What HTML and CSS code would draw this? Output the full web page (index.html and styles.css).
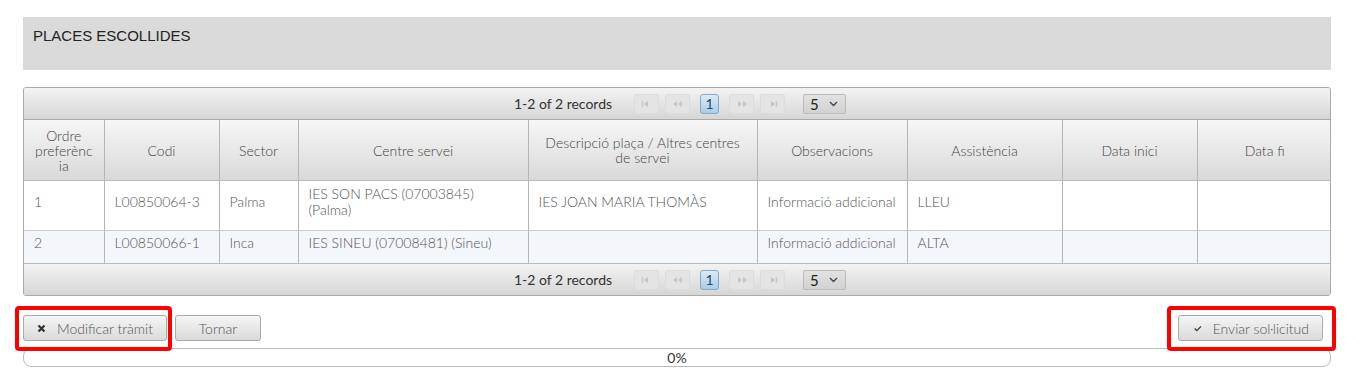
FILE: index.html
```html
<!DOCTYPE html>
<html lang="ca">
<head>
    <meta charset="UTF-8">
    <title>Places escollides</title>
    <link rel="stylesheet" href="styles.css">
</head>
<body>
    <div class="page">
        <div class="panel-title">PLACES ESCOLLIDES</div>

        <div class="grid">
            <div class="pager pager-top">
                <span class="records">1-2 of 2 records</span>
                <span class="pg-btn"><svg width="9" height="6" viewBox="0 0 9 6"><rect x="0" y="0" width="1.2" height="6" fill="#c4c4c4"/><path d="M6 0 L2 3 L6 6 Z" fill="#c4c4c4"/></svg></span>
                <span class="pg-btn"><svg width="10" height="6" viewBox="0 0 10 6"><path d="M4 0 L0 3 L4 6 Z M9 0 L5 3 L9 6 Z" fill="#c4c4c4"/></svg></span>
                <span class="pg-page">1</span>
                <span class="pg-btn"><svg width="10" height="6" viewBox="0 0 10 6"><path d="M1 0 L5 3 L1 6 Z M6 0 L10 3 L6 6 Z" fill="#c4c4c4"/></svg></span>
                <span class="pg-btn"><svg width="9" height="6" viewBox="0 0 9 6"><path d="M3 0 L7 3 L3 6 Z" fill="#c4c4c4"/><rect x="7.8" y="0" width="1.2" height="6" fill="#c4c4c4"/></svg></span>
                <span class="pg-select">5 <svg width="9" height="6" viewBox="0 0 9 6"><path d="M1 1 L4.5 4.5 L8 1" fill="none" stroke="#444" stroke-width="1.4"/></svg></span>
            </div>

            <table>
                <colgroup>
                    <col style="width: 80px">
                    <col style="width: 115px">
                    <col style="width: 79px">
                    <col style="width: 230px">
                    <col style="width: 229px">
                    <col style="width: 150px">
                    <col style="width: 155px">
                    <col style="width: 135px">
                    <col style="width: 135px">
                </colgroup>
                <thead>
                    <tr>
                        <th class="th-narrow">Ordre preferènc ia</th>
                        <th>Codi</th>
                        <th>Sector</th>
                        <th>Centre servei</th>
                        <th class="th-wide">Descripció plaça / Altres centres de servei</th>
                        <th>Observacions</th>
                        <th>Assistència</th>
                        <th>Data inici</th>
                        <th>Data fi</th>
                    </tr>
                </thead>
                <tbody>
                    <tr class="row-tall">
                        <td>1</td>
                        <td>L00850064-3</td>
                        <td>Palma</td>
                        <td>IES SON PACS (07003845) (Palma)</td>
                        <td>IES JOAN MARIA THOMÀS</td>
                        <td class="nowrap">Informació addicional</td>
                        <td>LLEU</td>
                        <td></td>
                        <td></td>
                    </tr>
                    <tr class="row-alt">
                        <td>2</td>
                        <td>L00850066-1</td>
                        <td>Inca</td>
                        <td>IES SINEU (07008481) (Sineu)</td>
                        <td></td>
                        <td class="nowrap">Informació addicional</td>
                        <td>ALTA</td>
                        <td></td>
                        <td></td>
                    </tr>
                </tbody>
            </table>

            <div class="pager pager-bottom">
                <span class="records">1-2 of 2 records</span>
                <span class="pg-btn"><svg width="9" height="6" viewBox="0 0 9 6"><rect x="0" y="0" width="1.2" height="6" fill="#c4c4c4"/><path d="M6 0 L2 3 L6 6 Z" fill="#c4c4c4"/></svg></span>
                <span class="pg-btn"><svg width="10" height="6" viewBox="0 0 10 6"><path d="M4 0 L0 3 L4 6 Z M9 0 L5 3 L9 6 Z" fill="#c4c4c4"/></svg></span>
                <span class="pg-page">1</span>
                <span class="pg-btn"><svg width="10" height="6" viewBox="0 0 10 6"><path d="M1 0 L5 3 L1 6 Z M6 0 L10 3 L6 6 Z" fill="#c4c4c4"/></svg></span>
                <span class="pg-btn"><svg width="9" height="6" viewBox="0 0 9 6"><path d="M3 0 L7 3 L3 6 Z" fill="#c4c4c4"/><rect x="7.8" y="0" width="1.2" height="6" fill="#c4c4c4"/></svg></span>
                <span class="pg-select">5 <svg width="9" height="6" viewBox="0 0 9 6"><path d="M1 1 L4.5 4.5 L8 1" fill="none" stroke="#444" stroke-width="1.4"/></svg></span>
            </div>
        </div>

        <div class="actions">
            <div class="actions-left">
                <button class="btn marked btn-modify"><svg width="9" height="9" viewBox="0 0 9 9"><path d="M1.5 1.5 L7.5 7.5 M7.5 1.5 L1.5 7.5" stroke="#333" stroke-width="2.2"/></svg>Modificar tràmit</button>
                <button class="btn btn-back">Tornar</button>
            </div>
            <button class="btn marked btn-send"><svg width="11" height="9" viewBox="0 0 11 9"><path d="M1 4.5 L4 7.5 L10 1.5" fill="none" stroke="#333" stroke-width="1.8"/></svg>Enviar sol·licitud</button>
        </div>

        <div class="progress">0%</div>
    </div>
</body>
</html>
```

FILE: styles.css
```css
body {
    margin: 0;
    background: #fff;
    font-family: Lato, "Open Sans", sans-serif;
    font-weight: 300;
    color: #555;
}

.page {
    padding: 17px 34px 0 23px;
}

.panel-title {
    background: #dadada;
    height: 53px;
    box-sizing: border-box;
    padding: 10px 10px;
    font-family: "Liberation Sans", Arial, sans-serif;
    font-weight: normal;
    font-size: 15px;
    color: #222;
}

.grid {
    margin-top: 17px;
    border: 1px solid #aaa;
    border-radius: 3px;
    overflow: hidden;
}

.pager {
    height: 31px;
    display: flex;
    align-items: center;
    justify-content: center;
    background: linear-gradient(#f3f3f3, #d6d6d6);
    font-size: 14px;
    font-weight: 400;
    color: #333;
}

.pager-top {
    border-bottom: 1px solid #aaa;
}

.pager-bottom {
    border-top: 1px solid #bbb;
}

.records {
    margin-right: 22px;
    padding-left: 6px;
}

.pg-btn {
    width: 25px;
    height: 20px;
    margin-right: 6px;
    display: flex;
    align-items: center;
    justify-content: center;
    background: #e4e4e4;
    border: 1px solid #dcdcdc;
    box-sizing: border-box;
    border-radius: 2px;
}

.pg-page {
    width: 19px;
    height: 20px;
    margin: 0 10px 0 4px;
    box-sizing: border-box;
    display: flex;
    align-items: center;
    justify-content: center;
    background: linear-gradient(#dcebf6, #a9cde7);
    border: 1px solid #7fa9c9;
    border-radius: 3px;
    color: #2a4a66;
    font-size: 14px;
}

.pg-select {
    width: 43px;
    height: 20px;
    margin-left: 12px;
    box-sizing: border-box;
    display: flex;
    align-items: center;
    gap: 10px;
    padding-left: 6px;
    background: linear-gradient(#e2e2e2, #d2d2d2);
    border: 1px solid #bbb;
    border-radius: 2px;
    color: #222;
    font-size: 15px;
}

table {
    width: 100%;
    border-collapse: collapse;
    table-layout: fixed;
    font-size: 14px;
}

th {
    height: 60px;
    padding: 0 4px;
    font-weight: 300;
    color: #444;
    line-height: 15px;
    background: linear-gradient(#f6f6f6, #d9d9d9);
    border-left: 1px solid #b5b5b5;
    border-bottom: 1px solid #bbb;
}

.th-narrow {
    padding: 0 9px;
}

.th-wide {
    padding: 0 14px;
}

td {
    padding: 0 10px 8px;
    line-height: 16px;
    border-left: 1px solid #b5b5b5;
    border-bottom: 1px solid #ccc;
    color: #555;
}

.nowrap {
    white-space: nowrap;
}

th:first-child,
td:first-child {
    border-left: none;
}

.row-tall td {
    height: 41px;
}

.row-alt td {
    height: 24px;
    background: #f3f6fb;
    border-bottom: none;
}

.actions {
    margin-top: 19px;
    display: flex;
    justify-content: space-between;
    align-items: center;
}

.actions-left {
    display: flex;
    gap: 8px;
}

.btn {
    height: 26px;
    box-sizing: border-box;
    display: flex;
    align-items: center;
    gap: 11px;
    padding: 0 13px;
    white-space: nowrap;
    background: linear-gradient(#f5f5f5, #dadada);
    border: 1px solid #aaa;
    border-radius: 3px;
    font-family: Lato, "Open Sans", sans-serif;
    font-weight: 300;
    font-size: 14px;
    color: #555;
    position: relative;
}

.btn-modify {
    width: 144px;
}

.btn-back {
    width: 86px;
    justify-content: center;
}

.btn-send {
    width: 145px;
    margin-right: 8px;
    padding-left: 15px;
}

.marked::after {
    content: "";
    position: absolute;
    left: -9px;
    top: -10px;
    right: -6px;
    bottom: -11px;
    border: 4px solid #f00;
    border-radius: 4px;
    pointer-events: none;
}

.btn-send.marked::after {
    left: -12px;
    right: -14px;
}

.progress {
    margin-top: 7px;
    height: 19px;
    box-sizing: border-box;
    border: 1px solid #bbb;
    border-radius: 8px;
    text-align: center;
    font-size: 14px;
    font-weight: 400;
    line-height: 17px;
    color: #333;
}
```
